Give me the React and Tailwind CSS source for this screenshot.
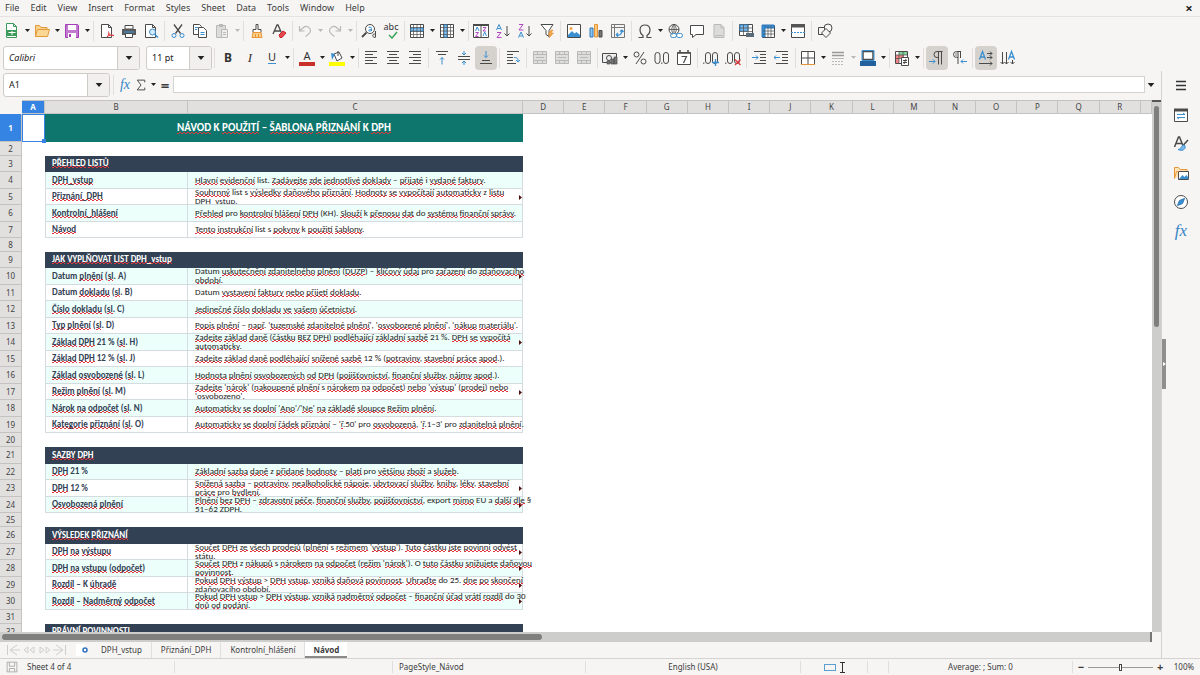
import React, { useState } from 'react';
import clsx from 'clsx';

const G = '#4a4a4a';
const B = '#3a8fd0';
const P = '#b146c2';
const L = '#b9b9b8';

const lines = (ys, x1 = 2, x2 = 14) => ys.map(y => <path key={y} d={`M${x1} ${y}.5H${x2}`} />);

const ICONS = {
  new: <><path d="M2.500 .5h7l3 3v11h-10z" fill="#fff" stroke="#3a9b5c" /><path d="M9.500 .5v3h3" stroke="#3a9b5c" /><path d="M3 7h10v6H3z" fill="#3a9b5c" stroke="none" /><path d="M4.500 9.500h7M8 8v4" stroke="#fff" /></>,
  open: <><path d="M1.500 13.500v-11h4l1.500 2h6v2" fill="#fbd28b" stroke="#e09a3a" /><path d="M1.500 13.500l2-7h12l-2 7z" fill="#fbd796" stroke="#e09a3a" /></>,
  save: <><path d="M1.500 1.500h12l1 1v12h-13z" fill="#c27ad0" stroke="#a13fb3" /><path d="M4 2h8v5H4z" fill="#fff" stroke="none" /><path d="M4 10h8v5H4z" fill="#fff" stroke="none" /><path d="M6 11v3" stroke="#a13fb3" strokeWidth="2" /></>,
  pdf: <><path d="M2.500 1.500h7l3 3v10h-10z" fill="#fff" stroke={G} /><path d="M9.500 1.500v3h3" stroke={G} /><path d="M8 14c2-2 2-4 1.500-5.500M9.500 10c1 2 3 3 5.500 2.500M8 14c2-2 5-2.500 7-1.500" stroke="#e0383e" /></>,
  print: <><path d="M4 2.500h8V6H4z" fill="#fff" stroke={G} /><path d="M1 6h14v6H1z" fill="#5a5a5a" stroke="none" /><path d="M3 9h10" stroke="#3aa0e8" /><path d="M4.500 10.500h7v4h-7z" fill="#fff" stroke={G} /></>,
  preview: <><path d="M2.500 1.500h7l3 3v10h-10z" fill="#fff" stroke={G} /><path d="M9.500 1.500v3h3" stroke={G} /><circle cx="9.500" cy="9" r="3" fill="#d6ebfa" stroke={B} /><path d="M12 11.500l3 3" stroke={B} strokeWidth="1.500" /></>,
  cut: <><path d="M4 1.500l6.500 9M12 1.500l-6.500 9" stroke={G} strokeWidth="1.300" /><circle cx="4" cy="12.500" r="2" stroke={B} /><circle cx="12" cy="12.500" r="2" stroke={B} /></>,
  copy: <><path d="M1.500 1.500h6l2 2v8h-8z" fill="#fff" stroke={G} /><path d="M6.500 4.500h5l3 3v7h-8z" fill="#fff" stroke={G} /><path d="M3 4.500h3M3 6.500h2M8.500 9.500h4M8.500 11.500h4" stroke={B} /></>,
  paste: <><path d="M2.500 2.500h9v12h-9z" fill="#dcdcdb" stroke={L} /><path d="M5 1h4v3H5z" fill={L} stroke="none" /><path d="M7.500 6.500h6v8h-6z" fill="#eee" stroke={L} /><path d="M9 9.500h3M9 11.500h3" stroke={L} /></>,
  brush: <><path d="M7 1.500h2v5h3v3H4v-3h3z" fill="#fff" stroke={G} /><path d="M4 9.500h8l1 5H3z" fill="#fbcf8a" stroke="#e8963a" /><path d="M6.500 11v3M9.500 11v3" stroke="#e8963a" /></>,
  clear: <><path d="M2 11l4-9h1l4 9M3.500 8h6" stroke={G} strokeWidth="1.300" /><path d="M8 12l4-4 3 2-4 4.500H9z" fill="#e8474c" stroke="#c9252b" /></>,
  undo: <path d="M2.500 3v5h5M2.500 8l4-3.500c3-2.500 7 0 7 3 0 2-1.500 3.500-5 6" stroke={L} strokeWidth="1.200" />,
  redo: <path d="M13.500 3v5h-5M13.500 8l-4-3.500c-3-2.500-7 0-7 3 0 2 1.500 3.500 5 6" stroke={L} strokeWidth="1.200" />,
  find: <><circle cx="9" cy="6" r="4.500" fill="#fff" stroke={G} /><path d="M5.500 9.500L1 14" stroke={G} strokeWidth="1.800" /><path d="M10.500 8V5.500c0-2-3-1.500-3-.5M10.500 6.500c-4-.5-3.500 3 0 1" stroke={B} /><path d="M14.500 8v6.500M14.500 11.500c-3-2-4 3-.5 3" stroke={G} /></>,
  table: <><path d="M1.500 1.500h13v13h-13z" fill="#fff" stroke={G} /><path d="M2 5h12v3H2z" fill="#8cc4ee" stroke={B} /><path d="M1.500 4.500h13M1.500 8.500h13M1.500 11.500h13M4.500 2v12M8 2v12M11.500 2v12" stroke={G} strokeWidth=".7" /></>,
  column: <><path d="M1.500 1.500h13v13h-13z" fill="#fff" stroke={G} /><path d="M5 2h3v12H5z" fill="#8cc4ee" stroke={B} /><path d="M1.500 4.500h13M1.500 8h13M1.500 11.500h13M4.500 2v12M8.500 2v12M11.500 2v12" stroke={G} strokeWidth=".7" /></>,
  sort: <><path d="M.5 1.500h15v13H.5zM8 2v12" fill="#fff" stroke={G} /><path d="M0 1h16v2H0z" fill={G} stroke="none" /><path d="M2.500 8L4.200 4 6 8M10 13l1.700-4 1.800 4" stroke={B} /><path d="M2.500 9.500h3l-3 4h3M10 4.500h3l-3 3.500h3" stroke={P} /></>,
  asc: <><path d="M1.500 7L4 1.500 6.500 7M2.500 5.500h3" stroke={B} /><path d="M2 9.500h4l-4 5h4.500" stroke={P} /><path d="M12 3v10M9.500 10.500L12 13l2.500-2.500" stroke={G} /></>,
  desc: <><path d="M1.500 14.500L4 9l2.500 5.500M2.500 13h3" stroke={B} /><path d="M2 1.500h4L2 7h4.500" stroke={P} /><path d="M12 3v10M9.500 10.500L12 13l2.500-2.500" stroke={G} /></>,
  filter: <><path d="M2 1.500h12L10 7.500v6l-3-2v-4z" fill="#fff" stroke={G} /><path d="M12 7l-3 4.500h2.500L10 15l4.500-5H12l2-3z" fill="#f3a545" stroke="#e38a20" strokeWidth=".5" /></>,
  image: <><path d="M1.500 1.500h13v13h-13z" fill="#fff" stroke={G} /><circle cx="5" cy="5.500" r="1.500" fill="#f3a545" stroke="none" /><path d="M2 14v-2l4-4 2.500 2.500L10.500 9l3.500 3v2z" fill={B} stroke="none" /></>,
  chart: <><path d="M2 5h3v9H2z" fill="#8cc4ee" stroke="#2f76b8" /><path d="M6.500 1.500h3V14h-3z" fill="#fbc77b" stroke="#e8963a" /><path d="M11 7.500h3V14h-3z" fill="#777" stroke={G} /></>,
  pivot: <><path d="M1.500 1.500h13v13h-13zM2 4.500h12M4.500 2v12" fill="#f4f4f4" stroke="#777" /><path d="M6 12c4 1 6-1 6-5M12 7l-2 1.500M12 7l1.500 2M6 12l2-2M6 12l2 1.500" stroke={B} strokeWidth="1.300" /></>,
  omega: <path d="M1.500 14.500H6v-2C2 10 1.500 2 8 2s6 8 2 10.500v2h4.500" stroke={G} strokeWidth="1.200" />,
  link: <><circle cx="7" cy="6.500" r="5" stroke={G} /><path d="M2 6.500h10M7 1.500v10M7 1.500c-3 3-3 7 0 10M7 1.500c3 3 3 7 0 10" stroke={G} strokeWidth=".8" /><path d="M5.500 10.500h4v3.500h-4zM10.500 10.500h4.500v3.500h-4.500z" fill="#fff" stroke="none" /><rect x="3.500" y="10.500" width="6" height="4" rx="2" stroke={B} /><rect x="9.500" y="10.500" width="6" height="4" rx="2" stroke={B} /></>,
  comment: <path d="M1.500 2.500h13v9H7l-3.500 3v-3h-2z" fill="#fff" stroke={G} />,
  header: <><path d="M3 1.500h7l3 3v10H3z" fill="#dcdcdb" stroke={L} /><path d="M4.500 12.500h7M10 2v3h3" stroke={L} /></>,
  area: <><path d="M1.500 1.500h13v11h-13z" fill="#fff" stroke={G} /><path d="M2 2h8v6H2z" fill="#7ab9ea" stroke={B} /><path d="M1.500 5h13M1.500 8.500h13M5.500 2v10M10 2v10" stroke={G} strokeWidth=".7" /><path d="M8 10h8v4H8z" fill="#5a6b7a" stroke="none" /></>,
  freeze: <><path d="M2.500 2.500h12v12h-12z" fill="#fff" stroke={G} /><path d="M2 2h3v12H2zM5 2h9v3H5z" fill={B} stroke="#2f76b8" /><path d="M3 8h11M3 11h11M8 3v11M11 3v11" stroke={G} strokeWidth=".7" /></>,
  split: <><path d="M1.500 1.500h13v13h-13z" fill="#fff" stroke={G} /><path d="M1 1h14v3.500H1z" fill="#555" stroke="none" /><path d="M1 9.500h15" stroke={B} strokeDasharray="2 1" /></>,
  shapes: <><circle cx="11" cy="5" r="4" stroke={G} /><path d="M1.500 4.500h6v7h-6z" fill="#f6f5f4" stroke={G} /><path d="M9 5.500l4.500 4.500L9 14.500 4.500 10z" fill="#f6f5f4" stroke={G} /></>,
  left: <g stroke={G}>{lines([1, 7, 13])}{lines([4, 10], 2, 10)}</g>,
  center: <g stroke={G}>{lines([1, 7, 13])}{lines([4, 10], 4, 12)}</g>,
  right: <g stroke={G}>{lines([1, 7, 13])}{lines([4, 10], 6, 14)}</g>,
  top: <><g stroke={G}>{lines([1])}{lines([4], 4, 12)}</g><path d="M8 14.500V7.500M6 9.500l2-2 2 2" stroke={B} /></>,
  middle: <><g stroke={G}>{lines([6, 9])}</g><path d="M8 1v4M6 3l2 2 2-2M8 15v-4M6 13l2-2 2 2" stroke={B} /></>,
  bottom: <><g stroke={G}>{lines([13])}{lines([10], 4, 12)}</g><path d="M8 1v6.500M6 5.500l2 2 2-2" stroke={B} /></>,
  wrap: <><g stroke={G}>{lines([1])}{lines([4, 7, 10], 2, 8)}{lines([13], 2, 11)}</g><path d="M9 7.500c4 0 4 1 4 4M11 10l2 2 2-2" stroke={B} /></>,
  merge: <><path d="M1.500 1.500h13v12h-13z" fill="#dededd" stroke={L} /><path d="M1.500 4.500h13M1.500 10.500h13M5.500 2v3M10.500 2v3M5.500 10v4M10.500 10v4M4 7.500h8" stroke={L} /></>,
  currency: <><path d="M.5 3.500h14v9H.5z" fill="#eee" stroke={G} /><circle cx="7" cy="8" r="2.500" stroke={G} /><path d="M9 9h3v5H9zM12 7h3v7h-3zM5 11h3v3H5z" fill="#777" stroke={G} strokeWidth=".7" /></>,
  percent: <><circle cx="4.500" cy="4.500" r="2.500" stroke={G} /><circle cx="11.500" cy="11.500" r="2.500" stroke={G} /><path d="M12 2L4 14" stroke={G} /></>,
  number: <><rect x="1" y="2.500" width="5" height="11" rx="2.500" stroke={G} /><rect x="9.500" y="2.500" width="5" height="11" rx="2.500" stroke={G} /><path d="M7.800 12.500v1.500" stroke={G} /></>,
  date: <><path d="M1.500 2.500h13v12h-13z" fill="#fff" stroke={G} /><path d="M1.500 3h13M4 0v2M12 0v2" stroke={G} strokeWidth="1.500" /><path d="M5.500 6.500h5L7.500 13" stroke={G} strokeWidth="1.200" /></>,
  addDec: <><path d="M.8 12.500v1.500" stroke={G} /><rect x="2.500" y="2.500" width="5" height="11" rx="2.500" stroke={G} /><rect x="9.500" y="2.500" width="5" height="11" rx="2.500" stroke={G} /><path d="M12.500 9v7M9 12.500h7" stroke={B} strokeWidth="1.300" /></>,
  delDec: <><path d="M.8 12.500v1.500" stroke={G} /><rect x="2.500" y="2.500" width="5" height="11" rx="2.500" stroke={G} /><rect x="9.500" y="2.500" width="5" height="11" rx="2.500" stroke={G} /><path d="M10 9.500l5.500 5.500M15.500 9.500L10 15" stroke="#e0383e" strokeWidth="1.300" /></>,
  indent: <><g stroke={G}>{lines([1, 13])}{lines([4, 7, 10], 8, 14)}</g><path d="M0 7.500h6M4 5.500l2 2-2 2" stroke={B} /></>,
  outdent: <><g stroke={G}>{lines([1, 13])}{lines([4, 7, 10], 8, 14)}</g><path d="M0 7.500h6M2 5.500l-2 2 2 2" stroke={B} /></>,
  borders: <><path d="M1.500 1.500h13v13h-13zM8 2v12M2 8h12" fill="#fff" stroke={G} /><path d="M1 14.500h14" stroke="#e8963a" /></>,
  style: <><path d="M2 2.500h12M2 5.500h12" stroke="#999" strokeWidth="1.500" /><path d="M2 8.500h12" stroke={L} /><path d="M2 11.500h12M2 14.500h12" stroke={L} strokeDasharray="2 1" /></>,
  color: <><path d="M3 1.500h10v8H3z" fill="#fff" stroke={G} strokeWidth="1.500" /><path d="M2 .5h12v10H2z" stroke={B} /><path d="M0 11h16v5H0z" fill="#245f9e" stroke="none" /></>,
  cond: <><path d="M1.500 1.500h12v12h-12z" fill="#fff" stroke={G} /><path d="M5 2h8v3H5z" fill="#7fd49a" stroke="none" /><path d="M2 5h3v8H2zM5 5h5v3H5z" fill="#ef8585" stroke="none" /><path d="M1.500 5h12M1.500 8.500h12M5 2v11M9 2v11" stroke={G} strokeWidth=".7" /><path d="M7.500 7.500h7v8h-7z" fill="#fff" stroke={G} /><path d="M9 10.500h4M9 12.500h4M12 9l-2 5" stroke={G} /></>,
  ltr: <><path d="M13.500 1.500H8a3 3 0 000 6h1.500M9.500 2v12.500M12.500 2v12.500" stroke={G} /><path d="M0 11.500h6M4 9.500l2 2-2 2" stroke={B} /></>,
  rtl: <><path d="M10 1.500H5.500a3 3 0 000 6H7M7 2v12M9.500 2v6" stroke={G} /><path d="M6 2v5.500C3 7.500 3 2 6 2z" fill={L} stroke="none" /><path d="M16 11.500h-6M12 9.500l-2 2 2 2" stroke={B} /></>,
  horiz: <><path d="M1.500 9.500l3-8 3 8M2.500 7h4" stroke={B} strokeWidth="1.300" /><path d="M9 3.500h5M9 7.500h5M12 1.500l2 2-2 2M12 5.500l2 2-2 2M1 13.500h13M12 11.500l2 2-2 2" stroke={G} /></>,
  vert: <><path d="M8.500 9.500l3-8 3 8M9.500 7h4" stroke={B} strokeWidth="1.300" /><path d="M2.500 2v12M6.500 2v12M.5 12l2 2 2-2M4.500 12l2 2 2-2M12.500 10v4M10.500 12l2 2 2-2" stroke={G} /></>,
  props: <><path d="M1.500 2.500h13v12h-13z" fill="#fff" stroke={G} /><path d="M1 1.500h14v3H1z" fill={G} stroke="none" /><path d="M4 7.500h8l-2-1.500M12 10.500H4L6 12" stroke={B} /></>,
  styles: <><path d="M1.500 11l4-10h1l4 10M3 7.500h6" stroke={G} strokeWidth="1.500" /><path d="M15 4l-5 5.500" stroke={G} strokeWidth="1.500" /><path d="M11 9c-3 0-2 4-6 4.500 4 2 8 0 7-3.500z" fill="#7ab9ea" stroke={B} /></>,
  gallery: <><path d="M1.500 13.500v-11h4l1.500 2h7v3" fill="#fde3b5" stroke="#e8963a" /><path d="M5.500 6.500h10v8h-10z" fill="#fff" stroke={G} /><path d="M6 14l3.500-4 2 2 2-2 2 3v1z" fill={B} stroke="none" /><path d="M1.500 13.500l2-7h2" stroke="#e8963a" /></>,
  compass: <><circle cx="8" cy="8" r="6.500" fill="#fff" stroke={G} /><path d="M11.500 4.500L9.500 9.500l-5 2 2-5z" fill={B} stroke="#2f76b8" /></>,
  sigma: <path d="M13 4.500V1.500H3l5 6.500-5 6.500h10v-3" stroke={G} strokeWidth="1.300" />,
  menu: <path d="M3 3.500h10M3 7.500h10M3 11.500h10" stroke="#333" strokeWidth="1.500" />,
  disk: <><path d="M1.500 1.500h13v13h-13zM4.500 2v5h7V2M4.500 14v-4h7v4" stroke="#999" /></>,
};

// entries: icon name, '|' (separator), ':' (narrow separator), 'v' / 'vd' (drop-down arrow, disabled)
const STANDARD = ['new', 'v', 'open', 'v', 'save', 'v', '|', 'pdf', 'print', 'preview', '|', 'cut', 'copy', 'paste', 'vd', '|', 'brush', 'clear', ':',
  'undo', 'vd', 'redo', 'vd', ':', 'find', 'spell', ':', 'table', 'v', 'column', 'v', ':', 'sort', 'asc', 'desc', 'filter', '|',
  'image', 'chart', 'pivot', '|', 'omega', 'v', 'link', 'comment', 'header', '|', 'area', 'freeze', 'v', 'split', '|', 'shapes'];
const FORMATTING = ['|', 'bold', 'italic', 'underline', 'v', '|', 'fontColor', 'v', 'highlight', 'v', ':', 'left', 'center', 'right', '|',
  'top', 'middle', 'bottom', '|', 'wrap', '|', 'merge', 'merge', 'merge', ':', 'currency', 'v', 'percent', 'number', 'date', '|',
  'addDec', 'delDec', '|', 'indent', 'outdent', ':', 'borders', 'v', 'style', 'vd', 'color', 'v', ':', 'cond', 'v', '|', 'ltr', 'rtl', '|', 'horiz', 'vert'];
const ACTIVE = ['bottom', 'ltr', 'horiz'];

const MENUS = ['File', 'Edit', 'View', 'Insert', 'Format', 'Styles', 'Sheet', 'Data', 'Tools', 'Window', 'Help'];
const COLUMNS = ['D', 'E', 'F', 'G', 'H', 'I', 'J', 'K', 'L', 'M', 'N', 'O', 'P', 'Q', 'R'];
const TABS = ['DPH_vstup', 'Přiznání_DPH', 'Kontrolní_hlášení', 'Návod'];

const ROWS = [
  { h: 28, title: 'NÁVOD K POUŽITÍ – ŠABLONA PŘIZNÁNÍ K DPH' },
  { h: 14 },
  { h: 16, section: 'PŘEHLED LISTŮ' },
  { h: 17, label: 'DPH_vstup', text: ['Hlavní evidenční list. Zadávejte zde jednotlivé doklady – přijaté i vydané faktury.'] },
  { h: 16, label: 'Přiznání_DPH', text: ['Souhrnný list s výsledky daňového přiznání. Hodnoty se vypočítají automaticky z listu', 'DPH_vstup.'] },
  { h: 17, label: 'Kontrolní_hlášení', text: ['Přehled pro kontrolní hlášení DPH (KH). Slouží k přenosu dat do systému finanční správy.'] },
  { h: 16, label: 'Návod', text: ['Tento instrukční list s pokyny k použití šablony.'] },
  { h: 14 },
  { h: 16, section: 'JAK VYPLŇOVAT LIST DPH_vstup' },
  { h: 17, label: 'Datum plnění (sl. A)', text: ['Datum uskutečnění zdanitelného plnění (DUZP) – klíčový údaj pro zařazení do zdaňovacího', 'období.'] },
  { h: 16, label: 'Datum dokladu (sl. B)', text: ['Datum vystavení faktury nebo přijetí dokladu.'] },
  { h: 17, label: 'Číslo dokladu (sl. C)', text: ['Jedinečné číslo dokladu ve vašem účetnictví.'] },
  { h: 16, label: 'Typ plnění (sl. D)', text: ["Popis plnění – např. 'tuzemské zdanitelné plnění', 'osvobozené plnění', 'nákup materiálu'."] },
  { h: 17, label: 'Základ DPH 21 % (sl. H)', text: ['Zadejte základ daně (částku BEZ DPH) podléhající základní sazbě 21 %. DPH se vypočítá', 'automaticky.'] },
  { h: 16, label: 'Základ DPH 12 % (sl. J)', text: ['Zadejte základ daně podléhající snížené sazbě 12 % (potraviny, stavební práce apod.).'] },
  { h: 17, label: 'Základ osvobozené (sl. L)', text: ['Hodnota plnění osvobozených od DPH (pojišťovnictví, finanční služby, nájmy apod.).'] },
  { h: 16, label: 'Režim plnění (sl. M)', text: ["Zadejte 'nárok' (nakoupené plnění s nárokem na odpočet) nebo 'výstup' (prodej) nebo", "'osvobozeno'."] },
  { h: 17, label: 'Nárok na odpočet (sl. N)', text: ["Automaticky se doplní 'Ano'/'Ne' na základě sloupce Režim plnění."] },
  { h: 16, label: 'Kategorie přiznání (sl. O)', text: ["Automaticky se doplní řádek přiznání – 'ř.50' pro osvobozená, 'ř.1–3' pro zdanitelná plnění."] },
  { h: 14 },
  { h: 17, section: 'SAZBY DPH' },
  { h: 16, label: 'DPH 21 %', text: ['Základní sazba daně z přidané hodnoty – platí pro většinu zboží a služeb.'] },
  { h: 17, label: 'DPH 12 %', text: ['Snížená sazba – potraviny, nealkoholické nápoje, ubytovací služby, knihy, léky, stavební', 'práce pro bydlení.'] },
  { h: 16, label: 'Osvobozená plnění', text: ['Plnění bez DPH – zdravotní péče, finanční služby, pojišťovnictví, export mimo EU a další dle §', '51–62 ZDPH.'] },
  { h: 14 },
  { h: 17, section: 'VÝSLEDEK PŘIZNÁNÍ' },
  { h: 16, label: 'DPH na výstupu', text: ["Součet DPH ze všech prodejů (plnění s režimem 'výstup'). Tuto částku jste povinni odvést", 'státu.'] },
  { h: 17, label: 'DPH na vstupu (odpočet)', text: ["Součet DPH z nákupů s nárokem na odpočet (režim 'nárok'). O tuto částku snižujete daňovou", 'povinnost.'] },
  { h: 16, label: 'Rozdíl – K úhradě', text: ['Pokud DPH výstup > DPH vstup, vzniká daňová povinnost. Uhraďte do 25. dne po skončení', 'zdaňovacího období.'] },
  { h: 17, label: 'Rozdíl – Nadměrný odpočet', text: ['Pokud DPH vstup > DPH výstup, vzniká nadměrný odpočet – finanční úřad vrátí rozdíl do 30', 'dnů od podání.'] },
  { h: 14 },
  { h: 16, section: 'PRÁVNÍ POVINNOSTI' },
];

const HEIGHTS = { 14: 'h-[14px]', 16: 'h-[16px]', 17: 'h-[17px]', 28: 'h-[28px]' };

const KNOWN = ['Datum', 'list', 's', 'z', 'do', 'pro', 'K', 'k', 'i', 'a', 'export', 'EU', 'A', 'B', 'C', 'D', 'H', 'J', 'L', 'M', 'N', 'O', 'KH'];

function Icon({ name, className = 'size-4' }) {
  return <svg viewBox="0 0 16 16" fill="none" className={clsx('shrink-0', className)} aria-hidden="true">{ICONS[name]}</svg>;
}

function Arrow({ disabled, className = 'w-[5px] h-[3px]' }) {
  return (
    <svg viewBox="0 0 10 6" className={className} aria-hidden="true">
      <path d="M0 0h10L5 6z" fill={disabled ? '#b9b9b8' : '#222'} />
    </svg>
  );
}

function Glyph({ name }) {
  switch (name) {
    case 'bold': return <span className="text-[12px] font-bold text-[#333]">B</span>;
    case 'italic': return <span className="font-['Liberation_Serif',serif] text-[13px] italic text-[#333]">I</span>;
    case 'underline': return <span className="text-[11px] text-[#333] border-b border-[#3a8fd0] leading-3">U</span>;
    case 'fontColor': return <span className="text-[11px] leading-3 text-[#333] w-4 text-center border-b-4 border-[#c9302c]">A</span>;
    case 'highlight':
      return (
        <svg viewBox="0 0 16 16" fill="none" className="size-4" aria-hidden="true">
          <path d="M5 4l5-2 3 6-5 3z" fill="#fff" stroke={G} />
          <path d="M9 1v5" stroke={G} />
          <path d="M2 3l4 1-3 6z" fill={B} />
          <path d="M0 12h16v4H0z" fill="#ffff00" />
        </svg>
      );
    case 'spell':
      return (
        <span className="relative flex items-start h-4 text-[9px] leading-2 text-[#333]">
          abc
          <svg viewBox="0 0 10 8" fill="none" className="absolute left-1 top-2 w-2.5 h-2" aria-hidden="true">
            <path d="M1 4l3 3 5-6" stroke="#3aa55c" strokeWidth="1.5" />
          </svg>
        </span>
      );
    default: return <Icon name={name} />;
  }
}

function Toolbar({ items }) {
  return items.map((item, i) => {
    if (item === '|' || item === ':') {
      return <div key={i} className={clsx('flex justify-center shrink-0', item === '|' ? 'w-[5px]' : 'w-1')}><div className="w-px h-5 bg-[#e0dfde]" /></div>;
    }
    if (item === 'v' || item === 'vd') {
      return <button key={i} aria-label={`${items[i - 1]} options`} className="w-2 h-6 flex items-center justify-center shrink-0"><Arrow disabled={item === 'vd'} /></button>;
    }
    return (
      <button key={i} aria-label={item} className={clsx('w-[22px] h-6 rounded-sm flex items-center justify-center shrink-0', ACTIVE.includes(item) && 'bg-[#d5d1cd]')}>
        <Glyph name={item} />
      </button>
    );
  });
}

function Combo({ value, label, width, className }) {
  return (
    <div className={clsx('h-6 flex shrink-0 border border-[#cfcbc7] rounded-[3px] bg-white overflow-hidden', width)}>
      <input aria-label={label} defaultValue={value} className={clsx('flex-1 min-w-0 px-[5px] text-[9px] text-[#222] outline-none', className)} />
      <button aria-label={`${label} list`} className="w-[22px] border-l border-[#cfcbc7] bg-[#f1f0ef] flex items-center justify-center">
        <Arrow className="w-2 h-1" />
      </button>
    </div>
  );
}

// Text with the spell checker's red wave below unknown words
function Spelled({ text }) {
  return text.split(/([\p{L}_]+)/u).map((part, i) => (
    i % 2 === 0 || KNOWN.includes(part)
      ? part
      : <span key={i} className="bg-[linear-gradient(90deg,#e0383e_2px,transparent_2px),linear-gradient(90deg,#e0383e_2px,transparent_2px)] bg-[length:4px_1px,4px_1px] bg-[position:0_100%,2px_calc(100%-1px)] bg-repeat-x">{part}</span>
  ));
}

function SheetRow({ row, number }) {
  const h = HEIGHTS[row.h];
  const tint = number % 2 === 0 ? 'bg-[#edfffb]' : 'bg-white';
  const border = 'border-b border-r border-[#d5dcdf]';
  return (
    <tr>
      <th scope="row" className="p-0 text-[8px]">
        <div className={clsx(h, 'flex items-center justify-center border-b border-r border-[#c4c3c2]', number === 1 ? 'bg-[#3584e4] text-white font-bold' : 'bg-[#e1e0df] text-[#444] font-normal')}>{number}</div>
      </th>
      <td className="p-0">
        {number === 1 && <div className={clsx(h, 'relative border border-[#3584e4]')}><span className="absolute -right-0.5 -bottom-0.5 size-1 bg-[#3584e4]" /></div>}
      </td>
      {row.title && <td colSpan={2} className="p-0"><div className={clsx(h, 'bg-[#0f766e] flex items-center justify-center text-white font-bold text-[11px]')}><span className="leading-3"><Spelled text={row.title} /></span></div></td>}
      {row.section && <td colSpan={2} className="p-0"><div className={clsx(h, 'bg-[#334155] flex items-center pl-[7px] pb-0.5 text-white font-bold')}><span className="leading-[10px]"><Spelled text={row.section} /></span></div></td>}
      {row.label && (
        <>
          <td className="p-0"><div className={clsx(h, tint, border, 'border-l flex items-center pl-1.5 pb-px font-bold text-[#334155]')}><span className="leading-[10px]"><Spelled text={row.label} /></span></div></td>
          <td className="p-0">
            <div className={clsx(h, tint, border, 'relative flex flex-col justify-center pl-[7px] pb-0.5 overflow-x-visible overflow-y-clip text-[#1e1e1e]')}>
              {row.text.map(line => <p key={line} className="leading-[9px] shrink-0 whitespace-nowrap"><Spelled text={line} /></p>)}
              {row.text.length > 1 && (
                <svg viewBox="0 0 3 5" className="absolute right-0 top-1.5 w-[3px] h-[5px]" aria-hidden="true"><path d="M0 0l3 2.500-3 2.500z" fill="#501010" /></svg>
              )}
            </div>
          </td>
        </>
      )}
    </tr>
  );
}

function Sheet() {
  return (
    <div className="flex-1 min-w-0 overflow-hidden bg-white">
      <table className="w-full table-fixed border-separate border-spacing-0 font-['Carlito','Lato',sans-serif] text-[9px]">
        <colgroup>
          <col className="w-[22px]" />
          <col className="w-[23px]" />
          <col className="w-[143px]" />
          <col className="w-[335px]" />
          {COLUMNS.map(c => <col key={c} />)}
          <col className="w-[11px]" />
        </colgroup>
        <thead className="font-['Noto_Sans',sans-serif] text-[8px]">
          <tr>
            {['', 'A', 'B', 'C', ...COLUMNS, ' '].map(c => (
              <th key={c} scope="col" className="p-0">
                <div className={clsx('h-[14px] flex items-center justify-center border-y border-r border-[#c4c3c2]', c === 'A' ? 'bg-[#3584e4] text-white font-bold' : c === '' ? 'bg-[#f6f5f4] border-transparent' : 'bg-[#e1e0df] text-[#444] font-normal')}>{c}</div>
              </th>
            ))}
          </tr>
        </thead>
        <tbody className="[&_th]:font-['Noto_Sans',sans-serif]">
          {ROWS.map((row, i) => <SheetRow key={i} row={row} number={i + 1} />)}
        </tbody>
      </table>
    </div>
  );
}

export default function App() {
  const [tab, setTab] = useState('Návod');

  return (
    <div className="h-screen flex flex-col overflow-hidden bg-[#f6f5f4] font-['Noto_Sans',sans-serif] text-[8px] text-[#3c3c3c]">
      <nav className="h-[17px] flex items-center justify-between shrink-0 border-b border-[#e4e3e2] text-[9px]">
        <div className="flex gap-px">
          {MENUS.map(m => <button key={m} className="px-[5px]">{m}</button>)}
        </div>
        <button aria-label="Close" className="w-[22px] font-bold text-[13px] leading-3 text-[#222]">×</button>
      </nav>

      <div className="h-[27px] flex items-center shrink-0 pl-px"><Toolbar items={STANDARD} /></div>
      <div className="h-[27px] flex items-center shrink-0 pl-[3px]">
        <Combo value="Calibri" label="Font name" width="w-[137px] mr-1.5" className="italic" />
        <Combo value="11 pt" label="Font size" width="w-[66px]" />
        <Toolbar items={FORMATTING} />
      </div>

      <div className="flex-1 min-h-0 flex">
        <div className="flex-1 min-w-0 flex flex-col">
          <div className="h-[27px] mb-0.5 flex items-center shrink-0 pl-[3px] pr-1">
            <Combo value="A1" label="Name box" width="w-[107px]" />
            <div className="w-px h-5 bg-[#e0dfde] mx-[3px]" />
            <button aria-label="Function wizard" className="w-4 font-['Liberation_Serif',serif] italic text-[14px] leading-4 text-[#3584c4]">fx</button>
            <button aria-label="Sum" className="w-4 flex justify-center"><Icon name="sigma" className="size-3" /></button>
            <button aria-label="Sum options" className="w-2 flex justify-center"><Arrow /></button>
            <button aria-label="Formula" className="w-4 text-[15px] leading-4 font-bold">=</button>
            <input aria-label="Input line" className="flex-1 min-w-0 h-[17px] bg-white border border-[#d5d3d1] outline-none" />
            <button aria-label="Expand formula bar" className="w-3 flex justify-center"><Arrow className="w-2 h-1" /></button>
          </div>

          <div className="flex-1 min-h-0 flex">
            <Sheet />
            <div className="w-[9px] shrink-0 bg-[#cdcdcc] border-t-2 border-[#555] flex flex-col items-center pt-1">
              <div className="w-[5px] h-[42%] rounded-full bg-[#7f7f7e]" />
            </div>
          </div>
          <div className="h-[10px] shrink-0 bg-[#cdcdcc] flex items-center pl-0.5 mr-[9px] border-r-2 border-[#777]">
            <div className="w-[47%] h-1.5 rounded-full bg-[#7f7f7e]" />
          </div>

          <div className="h-4 flex items-center shrink-0">
            <svg viewBox="0 0 62 12" fill="none" stroke="#cfcecd" className="w-[62px] h-3 ml-1.5" aria-hidden="true">
              <path d="M1.500 1v10M11 1L4 6l7 5M4 6h10M22 3l-4 3 4 3zM28 3l-4 3 4 3zM34 3l4 3-4 3zM40 3l4 3-4 3zM50 1l7 5-7 5M57 6H47M59.500 1v10" />
            </svg>
            <button aria-label="Add sheet" className="w-5 h-3 ml-1 flex items-center justify-center">
              <svg viewBox="0 0 12 12" className="size-3" aria-hidden="true"><path d="M0 0h9v12H0z" fill="#fff" /><circle cx="9" cy="6" r="2" fill="#fff" stroke="#2f6fc0" strokeWidth="1.5" /></svg>
            </button>
            {TABS.map(t => (
              <button
                key={t}
                onClick={() => setTab(t)}
                className={clsx('h-4 text-center', t === tab ? 'px-2 bg-white font-bold shadow-[inset_0_-2px_#8a8a89]' : 'px-[9px] border-r border-[#e0dfde]')}
              >
                {t}
              </button>
            ))}
          </div>
        </div>

        <aside className="relative w-[39px] shrink-0 border-l border-[#d5d3d1] flex flex-col items-center">
          <button aria-label="Hide sidebar" className="absolute left-0 top-[268px] w-1 h-[50px] bg-[#8f8f8e] text-white flex items-center justify-center">
            <svg viewBox="0 0 3 4" className="w-[3px] h-1" aria-hidden="true"><path d="M0 0l3 2-3 2z" fill="#fff" /></svg>
          </button>
          {['menu', 'props', 'styles', 'gallery', 'compass'].map(name => (
            <button key={name} aria-label={name} className="w-6 h-[29px] flex items-center justify-center"><Icon name={name} /></button>
          ))}
          <button aria-label="Functions" className="w-6 h-[29px] font-['Liberation_Serif',serif] italic text-[17px] text-[#3584c4]">fx</button>
        </aside>
      </div>

      <footer className="h-[17px] flex items-center shrink-0 border-t border-[#d5d3d1]">
        <div className="flex items-center w-[174px]"><Icon name="disk" className="size-3 mx-1.5" /><span className="ml-[3px]">Sheet 4 of 4</span></div>
        <div className="w-[218px] h-3 border-l border-[#e0dfde]" />
        <div className="w-[193px] border-l border-[#e0dfde] pl-1.5">PageStyle_Návod</div>
        <div className="flex-1 text-center border-l border-[#e0dfde]">English (USA)</div>
        <div className="w-[68px] flex items-center justify-center gap-1 border-x border-[#e0dfde] h-3">
          <span className="w-3 h-[7px] border border-[#5a9fd0]" />
          <svg viewBox="0 0 5 11" fill="none" className="w-[5px] h-[11px]" aria-hidden="true"><path d="M0 .5h5M0 10.500h5M2.500 0v11" stroke="#333" /></svg>
        </div>
        <div className="w-[20px] h-3" />
        <div className="w-[184px] text-center border-l border-[#e0dfde]">Average: ; Sum: 0</div>
        <div className="w-[96px] h-3 flex items-center justify-center gap-1 border-l border-[#e0dfde]">
          <button aria-label="Zoom out" className="font-bold text-[11px] leading-3">−</button>
          <input type="range" aria-label="Zoom" className="w-[65px] h-3 appearance-none bg-[linear-gradient(#999,#999)] bg-[length:100%_1px] bg-center bg-no-repeat [&::-webkit-slider-thumb]:appearance-none [&::-webkit-slider-thumb]:w-[3px] [&::-webkit-slider-thumb]:h-[7px] [&::-webkit-slider-thumb]:border [&::-webkit-slider-thumb]:border-[#444] [&::-webkit-slider-thumb]:bg-white" />
          <button aria-label="Zoom in" className="font-bold text-[11px] leading-3">+</button>
        </div>
        <div className="w-[32px] text-center">100%</div>
      </footer>
    </div>
  );
}
